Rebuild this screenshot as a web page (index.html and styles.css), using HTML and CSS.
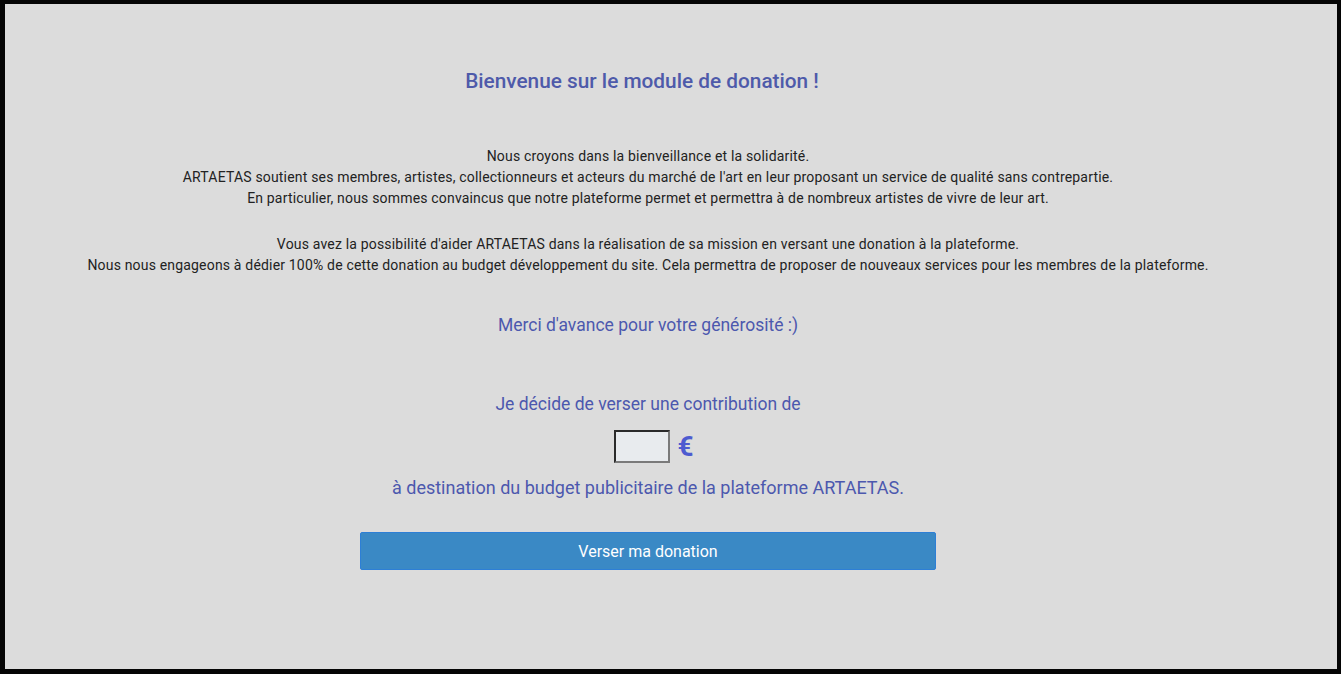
FILE: index.html
```html
<!DOCTYPE html>
<html lang="fr">
<head>
<meta charset="utf-8">
<title>Module de donation</title>
<link rel="stylesheet" href="styles.css">
</head>
<body>
<div class="frame">
  <main class="content">
    <h1 class="title">Bienvenue sur le module de donation !</h1>
    <p class="text text-first">Nous croyons dans la bienveillance et la solidarité.<br>
    ARTAETAS soutient ses membres, artistes, collectionneurs et acteurs du marché de l'art en leur proposant un service de qualité sans contrepartie.<br>
    En particulier, nous sommes convaincus que notre plateforme permet et permettra à de nombreux artistes de vivre de leur art.</p>
    <p class="text text-second">Vous avez la possibilité d'aider ARTAETAS dans la réalisation de sa mission en versant une donation à la plateforme.<br>
    Nous nous engageons à dédier 100% de cette donation au budget développement du site. Cela permettra de proposer de nouveaux services pour les membres de la plateforme.</p>
    <p class="blue thanks">Merci d'avance pour votre générosité :)</p>
    <p class="blue decide">Je décide de verser une contribution de</p>
    <div class="amount-row">
      <input class="amount" type="text" aria-label="Montant">
      <span class="euro">€</span>
    </div>
    <p class="blue dest">à destination du budget publicitaire de la plateforme ARTAETAS.</p>
    <button class="donate" type="button">Verser ma donation</button>
  </main>
</div>
</body>
</html>
```

FILE: styles.css
```css
html, body {
  margin: 0;
  padding: 0;
}
body {
  font-family: Roboto, "Liberation Sans", Arial, sans-serif;
  background: #000;
}
.frame {
  box-sizing: border-box;
  width: 1341px;
  height: 674px;
  border-style: solid;
  border-color: #050505;
  border-width: 4px 4px 5px 5px;
  background: #dcdcdc;
  overflow: hidden;
}
.content {
  display: flex;
  flex-direction: column;
  align-items: center;
  padding: 65px 46px 0 0;
  text-align: center;
}
.title {
  margin: 0;
  padding-right: 12px;
  font-size: 20.8px;
  line-height: 24px;
  font-weight: 500;
  color: #4e5aaa;
}
.text {
  margin: 0;
  font-size: 14px;
  line-height: 21px;
  letter-spacing: 0.18px;
  color: #222;
}
.text-first {
  margin-top: 53px;
}
.text-second {
  margin-top: 25px;
}
.blue {
  margin: 0;
  font-size: 17.5px;
  line-height: 20px;
  font-weight: 400;
  color: #4c58ae;
}
.thanks {
  margin-top: 39px;
}
.decide {
  margin-top: 59px;
}
.amount-row {
  display: flex;
  align-items: center;
  gap: 7px;
  margin-top: 16px;
  margin-left: 12px;
}
.amount {
  box-sizing: border-box;
  width: 56px;
  height: 33px;
  margin: 0;
  padding: 0 4px;
  background: #e8ebee;
  border-style: solid;
  border-width: 2px;
  border-color: #2a2a2a #7a7a7a #7a7a7a #2a2a2a;
  font: 14px Roboto, sans-serif;
}
.euro {
  font-size: 28px;
  line-height: 33px;
  font-weight: 700;
  color: #4d5bd0;
}
.dest {
  margin-top: 15px;
  font-size: 18px;
}
.donate {
  margin-top: 34px;
  width: 576px;
  height: 38px;
  background: #3a89c5;
  border: 1px solid #2d7fd6;
  border-radius: 2px;
  color: #fff;
  font-family: Roboto, "Liberation Sans", sans-serif;
  font-size: 16px;
  cursor: pointer;
}
```
